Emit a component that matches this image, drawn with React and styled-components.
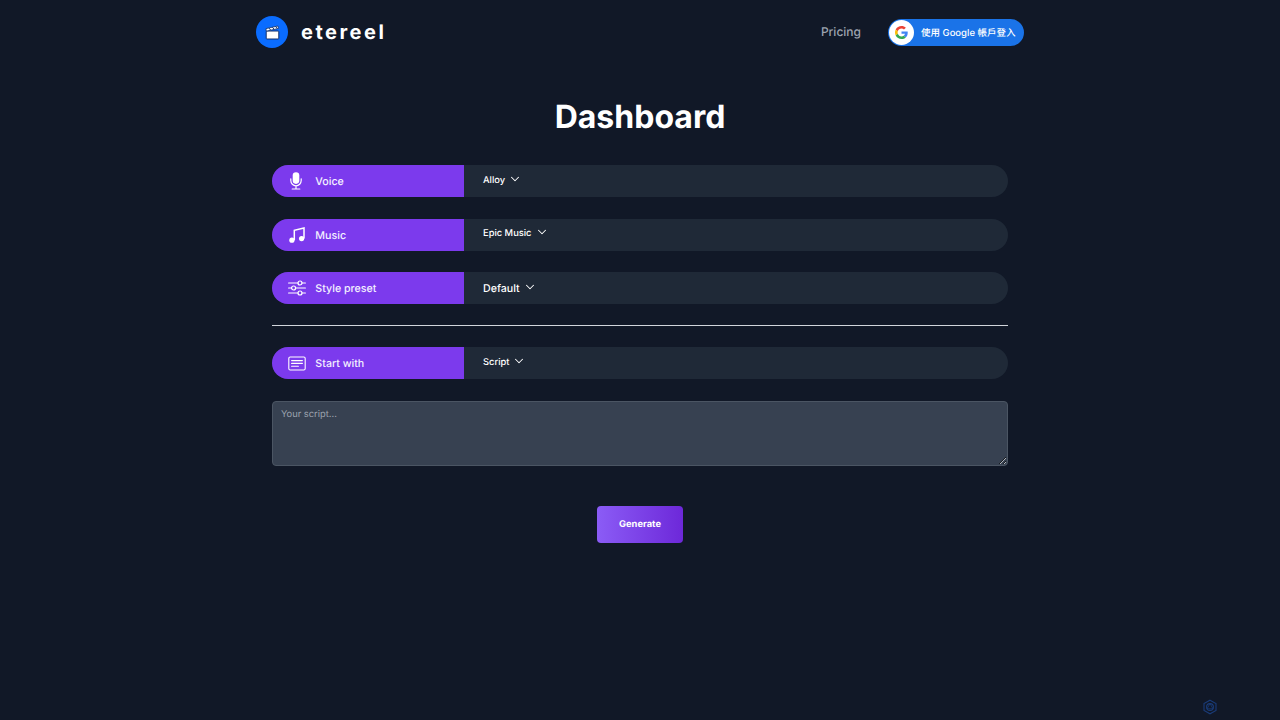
import React from "react";
import styled, { createGlobalStyle } from "styled-components";
import { ChevronDown } from "lucide-react";

const Global = createGlobalStyle`
  html, body { margin: 0; padding: 0; background: #111827; }
  body {
    font-family: Inter, "Noto Sans CJK SC", sans-serif;
    color: #fff;
    min-height: 720px;
    text-rendering: geometricPrecision;
  }
  * { box-sizing: border-box; }
  button, textarea { text-rendering: geometricPrecision; }
`;

const Page = styled.div`
  width: 768px;
  margin: 0 auto;
`;

const Header = styled.header`
  height: 64px;
  display: flex;
  align-items: center;
  justify-content: space-between;
`;

const Brand = styled.div`
  display: flex;
  align-items: center;
  gap: 13px;
`;

const LogoBadge = styled.div`
  width: 32px;
  height: 32px;
  border-radius: 50%;
  background: #0a6cff;
  display: flex;
  align-items: center;
  justify-content: center;
`;

const BrandName = styled.span`
  font-size: 20px;
  font-weight: 700;
  letter-spacing: 2.5px;
  color: #fff;
`;

const Nav = styled.nav`
  display: flex;
  align-items: center;
  gap: 27px;
`;

const NavLink = styled.a`
  font-size: 12px;
  font-weight: 500;
  color: #9ca3af;
  margin-top: -1px;
`;

const GoogleButton = styled.button`
  width: 136px;
  height: 27px;
  padding: 1px;
  border: 0;
  border-radius: 14px;
  background: #1a73e8;
  display: flex;
  align-items: center;
  color: #fff;
  font-family: Inter, "Noto Sans CJK SC", sans-serif;
  font-size: 9.5px;
  font-weight: 500;
  gap: 7px;
`;

const GoogleMark = styled.span`
  width: 25px;
  height: 25px;
  border-radius: 50%;
  background: #fff;
  display: flex;
  align-items: center;
  justify-content: center;
`;

const Main = styled.main`
  padding: 0 16px;
`;

const Title = styled.h1`
  margin: 0;
  padding-top: 31px;
  height: 101.33px;
  text-align: center;
  font-size: 32px;
  line-height: 43px;
  font-weight: 700;
  color: #fff;
`;

const Row = styled.div`
  height: 32px;
  margin-bottom: 21.33px;
  display: flex;
  border-radius: 16px;
  overflow: hidden;
  background: #1f2937;
`;

const RowLabel = styled.div`
  width: 192px;
  flex: none;
  background: #7c3aed;
  display: flex;
  align-items: center;
  font-size: 10.67px;
  font-weight: 500;
  color: #f3f0ff;
`;

const LabelText = styled.span`
  padding-top: 1px;
`;

const IconSlot = styled.span`
  width: 43.33px;
  padding-left: 16px;
  flex: none;
  display: flex;
  align-items: center;
`;

const Select = styled.div`
  padding-left: 19px;
  display: flex;
  align-items: center;
  gap: 3px;
  height: ${p => (p.$large ? "33px" : "30px")};
  font-size: ${p => (p.$large ? "10.67px" : "9.33px")};
  font-weight: 500;
  color: #fff;
  svg { width: 14px; height: 14px; margin-top: -2.5px; }
`;

const Divider = styled.hr`
  margin: 0 0 21px;
  border: 0;
  border-top: 1px solid #d1d5db;
`;

const Script = styled.textarea`
  display: block;
  width: 100%;
  height: 65px;
  padding: 6px 8px;
  margin: 0;
  background: #374151;
  border: 1px solid #4b5563;
  border-radius: 4px;
  color: #fff;
  font-family: Inter, sans-serif;
  font-size: 9.33px;
  line-height: 14px;
  outline: none;
  &::placeholder { color: #9ca3af; opacity: 1; }
`;

const Actions = styled.div`
  display: flex;
  justify-content: center;
  padding-top: 40px;
`;

const Generate = styled.button`
  width: 85.33px;
  height: 37.33px;
  padding: 1px 0 0;
  border: 0;
  border-radius: 4px;
  background: linear-gradient(90deg, #8b5cf6, #6d28d9);
  color: #fff;
  font-family: Inter, sans-serif;
  font-size: 9.33px;
  font-weight: 700;
`;

const Corner = styled.div`
  position: fixed;
  left: 1202px;
  top: 699px;
  width: 16px;
  height: 16px;
`;

const Clapper = () => (
  <svg width="15" height="15" viewBox="0 0 15 15">
    <rect x="1.2" y="6" width="12.6" height="8" rx="0.8" fill="#fff" stroke="#12306a" strokeWidth="1" />
    <path d="M1.2 6 L1 3.6 L12.8 1 L13.5 3.4 L2 6 Z" fill="#fff" stroke="#12306a" strokeWidth="0.8" />
    <path d="M4 3.1 L5.6 5 M7.4 2.3 L9 4.2 M10.6 1.6 L12.2 3.5" stroke="#12306a" strokeWidth="1" />
  </svg>
);

const GoogleG = () => (
  <svg width="13" height="13" viewBox="0 0 48 48">
    <path fill="#EA4335" d="M24 9.5c3.54 0 6.71 1.22 9.21 3.6l6.85-6.85C35.9 2.38 30.47 0 24 0 14.62 0 6.51 5.38 2.56 13.22l7.98 6.19C12.43 13.72 17.74 9.5 24 9.5z" />
    <path fill="#4285F4" d="M46.98 24.55c0-1.57-.15-3.09-.38-4.55H24v9.02h12.94c-.58 2.96-2.26 5.48-4.78 7.18l7.73 6c4.51-4.18 7.09-10.36 7.09-17.65z" />
    <path fill="#FBBC05" d="M10.53 28.59c-.48-1.45-.76-2.99-.76-4.59s.27-3.14.76-4.59l-7.98-6.19C.92 16.46 0 20.12 0 24c0 3.88.92 7.54 2.56 10.78l7.97-6.19z" />
    <path fill="#34A853" d="M24 48c6.48 0 11.93-2.13 15.89-5.81l-7.73-6c-2.15 1.45-4.92 2.3-8.16 2.3-6.26 0-11.57-4.22-13.47-9.91l-7.98 6.19C6.51 42.62 14.62 48 24 48z" />
  </svg>
);

const MicIcon = () => (
  <svg width="16" height="18" viewBox="0 0 16 18" fill="none" stroke="#fff" strokeLinecap="round">
    <rect x="4.7" y="0.3" width="6.6" height="11.6" rx="3.3" fill="#fff" stroke="none" />
    <path d="M2.8 6.8V8.6a5.2 5.2 0 0 0 10.4 0V6.8M8 13.8V16.8M4.2 17H11.8" strokeWidth="1.2" />
  </svg>
);

const MusicIcon = () => (
  <svg width="18" height="16" viewBox="0 0 18 16" fill="none">
    <path d="M6.3 13.2V3.3L16 1V11.6" stroke="#fff" strokeWidth="1.5" />
    <circle cx="3.9" cy="13.2" r="2.6" fill="#fff" />
    <circle cx="13.6" cy="11.6" r="2.6" fill="#fff" />
  </svg>
);

const SlidersIcon = () => (
  <svg width="18" height="16" viewBox="0 0 18 16" fill="none" stroke="#fff" strokeWidth="1.2">
    <path d="M0.6 3H10M14 3H17.4M0.6 8H3.6M7.6 8H17.4M0.6 13H10M14 13H17.4" strokeLinecap="round" />
    <circle cx="12" cy="3" r="2" />
    <circle cx="5.6" cy="8" r="2" />
    <circle cx="12" cy="13" r="2" />
  </svg>
);

const ScriptIcon = () => (
  <svg width="18" height="15" viewBox="0 0 18 15" fill="none" stroke="#fff" strokeWidth="1.1">
    <rect x="0.8" y="1" width="16.4" height="13" rx="1.4" />
    <path d="M3.6 4.6H14.4M3.6 7.4H14.4M3.6 10.2H10.4" strokeLinecap="round" />
  </svg>
);

const CornerMark = () => (
  <svg width="16" height="16" viewBox="0 0 16 16" fill="none" stroke="#1e4b9c" strokeWidth="1.1" opacity="0.7">
    <path d="M8 1.2 14 4.6V11.4L8 14.8 2 11.4V4.6Z" />
    <circle cx="8" cy="8" r="3.4" />
    <path d="M8 4.6 11 9.8M5 9.8 8 4.6M5 9.8H11" strokeWidth="0.8" />
  </svg>
);

const Field = ({ icon, label, value, large }) => (
  <Row>
    <RowLabel>
      <IconSlot>{icon}</IconSlot>
      <LabelText>{label}</LabelText>
    </RowLabel>
    <Select $large={large}>
      {value}
      <ChevronDown strokeWidth={1.75} />
    </Select>
  </Row>
);

export default function App() {
  return (
    <>
      <Global />
      <Page>
        <Header>
          <Brand>
            <LogoBadge><Clapper /></LogoBadge>
            <BrandName>etereel</BrandName>
          </Brand>
          <Nav>
            <NavLink>Pricing</NavLink>
            <GoogleButton>
              <GoogleMark><GoogleG /></GoogleMark>
              使用 Google 帳戶登入
            </GoogleButton>
          </Nav>
        </Header>
        <Main>
          <Title>Dashboard</Title>
          <Field icon={<MicIcon />} label="Voice" value="Alloy" />
          <Field icon={<MusicIcon />} label="Music" value="Epic Music" />
          <Field icon={<SlidersIcon />} label="Style preset" value="Default" large />
          <Divider />
          <Field icon={<ScriptIcon />} label="Start with" value="Script" />
          <Script placeholder="Your script..." />
          <Actions>
            <Generate>Generate</Generate>
          </Actions>
        </Main>
      </Page>
      <Corner><CornerMark /></Corner>
    </>
  );
}
